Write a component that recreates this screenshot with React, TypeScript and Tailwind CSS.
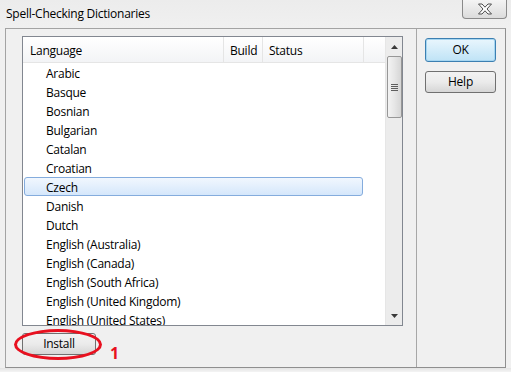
import React from 'react';

const languages = [
  'Arabic',
  'Basque',
  'Bosnian',
  'Bulgarian',
  'Catalan',
  'Croatian',
  'Czech',
  'Danish',
  'Dutch',
  'English (Australia)',
  'English (Canada)',
  'English (South Africa)',
  'English (United Kingdom)',
  'English (United States)',
];

function CloseButton() {
  return (
    <div className="w-[45px] h-[19px] border border-t-0 border-[#8a8a8a] rounded-b-[4px] bg-gradient-to-b from-[#f4f4f4] to-[#dcdcdc] flex items-center justify-center">
      <svg width="16" height="12" viewBox="0 0 16 12">
        <path
          d="M1.5 1 L5 1 L8 4.2 L11 1 L14.5 1 L10 6 L14.5 11 L11 11 L8 7.8 L5 11 L1.5 11 L6 6 Z"
          fill="#ffffff"
          stroke="#4e4e4e"
          strokeWidth="1"
          strokeLinejoin="round"
        />
      </svg>
    </div>
  );
}

function Scrollbar() {
  return (
    <div className="w-[17px] h-full bg-[#ececec] border-l border-[#e6e6e6] flex flex-col items-center">
      <div className="h-[19px] w-full flex items-center justify-center">
        <svg width="7" height="4" viewBox="0 0 7 4">
          <path d="M0 4 L3.5 0 L7 4 Z" fill="#3a3a3a" />
        </svg>
      </div>
      <div className="w-[15px] h-[62px] rounded-[2px] border border-[#979797] bg-gradient-to-r from-[#f3f3f3] via-[#e6e6e6] to-[#d6d6d6] flex flex-col items-center justify-center gap-[1px]">
        <div className="w-[7px] h-[1px] bg-[#5e5e5e]" />
        <div className="w-[7px] h-[1px] bg-[#5e5e5e]" />
        <div className="w-[7px] h-[1px] bg-[#5e5e5e]" />
        <div className="w-[7px] h-[1px] bg-[#5e5e5e]" />
      </div>
      <div className="flex-1" />
      <div className="h-[19px] w-full flex items-center justify-center">
        <svg width="7" height="4" viewBox="0 0 7 4">
          <path d="M0 0 L7 0 L3.5 4 Z" fill="#3a3a3a" />
        </svg>
      </div>
    </div>
  );
}

export default function App() {
  return (
    <div
      className="w-[511px] h-[372px] bg-[#f0f0f0] flex flex-col text-[12px] tracking-[-0.25px] text-black overflow-hidden"
      style={{ fontFamily: '"Open Sans", "Noto Sans", sans-serif' }}
    >
      {/* title bar */}
      <div className="h-[28px] flex items-start justify-between pl-[6px] pr-[4px] bg-gradient-to-b from-[#ececec] to-[#f0f0f0]">
        <span className="mt-[6px] leading-[16px]">Spell-Checking Dictionaries</span>
        <CloseButton />
      </div>

      {/* body */}
      <div className="h-[340px] mx-[5px] border border-[#a3a3a3] border-r-[#8f8f8f] border-b-[#8f8f8f] flex">
        <div className="w-[410px] pl-[16px] pt-[7px] flex flex-col">
          <div className="w-[381px] h-[290px] border border-[#828790] bg-white flex overflow-hidden">
            <div className="flex-1 flex flex-col overflow-hidden">
              <div className="h-[26px] shrink-0 flex border-b border-[#e5e5e5] bg-gradient-to-b from-[#ffffff] to-[#f3f4f6]">
                <div className="w-[201px] pl-[7px] pt-[2px] flex items-center border-r border-[#e5e5e5]">Language</div>
                <div className="w-[39px] pl-[6px] pt-[2px] flex items-center border-r border-[#e5e5e5]">Build</div>
                <div className="w-[101px] pl-[6px] pt-[2px] flex items-center border-r border-[#e5e5e5]">Status</div>
                <div className="flex-1" />
              </div>
              <div className="flex flex-col">
                {languages.map((l) => (
                  <div key={l} className="h-[19px] shrink-0 flex">
                    <div
                      className={
                        l === 'Czech'
                          ? 'w-[339px] ml-[1px] pl-[21px] pt-[2px] flex items-center rounded-[3px] border border-[#84acdd] bg-gradient-to-b from-[#f1f7fe] to-[#d5e7fb]'
                          : 'w-[339px] ml-[1px] pl-[21px] pt-[2px] flex items-center border border-transparent'
                      }
                    >
                      {l}
                    </div>
                  </div>
                ))}
              </div>
            </div>
            <Scrollbar />
          </div>
          <div className="relative mt-[7px] w-[74px]">
            <button className="w-[74px] h-[22px] rounded-[3px] border border-[#707070] bg-gradient-to-b from-[#f2f2f2] via-[#ebebeb] to-[#d6d6d6] flex items-center justify-center">
              Install
            </button>
            <div className="absolute left-[-8px] top-[-4px] w-[88px] h-[31px] rounded-[50%] border-[3px] border-[#e8101f]" />
            <span className="absolute left-[88px] top-[12px] text-[16px] font-bold text-[#e8101f] leading-[16px]">1</span>
          </div>
        </div>
        <div className="border-l border-[#a7a7a7] flex-1 pl-[8px] pt-[9px] flex flex-col gap-[9px]">
          <button className="w-[71px] h-[24px] rounded-[3px] border border-[#3c7fb1] bg-gradient-to-b from-[#e9f6fd] to-[#bfe3f6] flex items-center justify-center shadow-[inset_0_0_0_1px_#a6d6f1]">
            OK
          </button>
          <button className="w-[71px] h-[22px] rounded-[3px] border border-[#707070] bg-gradient-to-b from-[#f2f2f2] via-[#ebebeb] to-[#d6d6d6] flex items-center justify-center">
            Help
          </button>
        </div>
      </div>
      <div className="flex-1 bg-gradient-to-b from-[#e4e4e4] to-[#f4f4f4]" />
    </div>
  );
}
